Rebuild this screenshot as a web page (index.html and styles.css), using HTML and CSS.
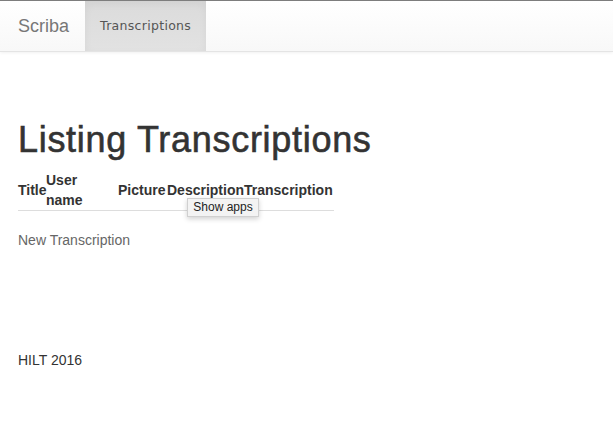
FILE: index.html
```html
<!DOCTYPE html>
<html>
<head>
<meta charset="utf-8">
<title>Scriba</title>
<link rel="stylesheet" href="styles.css">
</head>
<body>
<nav class="navbar">
  <a class="brand" href="#">Scriba</a>
  <a class="nav-item active" href="#">Transcriptions</a>
</nav>
<main class="container">
  <h1 class="title">Listing Transcriptions</h1>
  <table class="list">
    <colgroup>
      <col class="c-title">
      <col class="c-user">
      <col class="c-picture">
      <col class="c-desc">
      <col class="c-trans">
    </colgroup>
    <thead>
      <tr>
        <th>Title</th>
        <th class="th-user">User name</th>
        <th>Picture</th>
        <th>Description</th>
        <th>Transcription</th>
      </tr>
    </thead>
    <tbody></tbody>
  </table>
  <a class="new-link" href="#">New Transcription</a>
  <footer class="footer">HILT 2016</footer>
</main>
<div class="tooltip">Show apps</div>
</body>
</html>
```
FILE: styles.css
```css
html, body {
  margin: 0;
  padding: 0;
  background: #fff;
}
body {
  font-family: "Liberation Sans", Arial, Helvetica, sans-serif;
  font-size: 14px;
  line-height: 20px;
  color: #333;
}
a {
  text-decoration: none;
}
.navbar {
  display: flex;
  align-items: stretch;
  height: 50px;
  border-top: 1px solid #7d7d7d;
  border-bottom: 1px solid #e4e4e4;
  background: linear-gradient(to bottom, #ffffff 0%, #f8f8f8 100%);
  box-shadow: 0 1px 3px rgba(0, 0, 0, 0.06);
}
.brand {
  display: flex;
  align-items: center;
  padding: 0 16px 0 18px;
  font-size: 18px;
  color: #777;
}
.nav-item {
  display: flex;
  align-items: center;
  padding: 0 15px;
  font-family: "DejaVu Sans", Verdana, sans-serif;
  font-size: 12.5px;
  letter-spacing: 0.3px;
  color: #555;
}
.nav-item.active {
  background: linear-gradient(to bottom, #dbdbdb 0%, #e2e2e2 100%);
  box-shadow: inset 0 3px 9px rgba(0, 0, 0, 0.05);
}
.container {
  padding: 0 18px;
}
.title {
  margin: 68px 0 0;
  font-size: 36px;
  line-height: 40px;
  font-weight: normal;
  letter-spacing: 0.7px;
  -webkit-text-stroke: 0.6px #333;
  color: #333;
}
.list {
  margin-top: 10px;
  border-collapse: collapse;
  table-layout: fixed;
  width: 316px;
}
.c-title { width: 28px; }
.c-user { width: 72px; }
.c-picture { width: 49px; }
.c-desc { width: 77px; }
.c-trans { width: 90px; }
.list th {
  padding: 0;
  text-align: left;
  vertical-align: middle;
  font-weight: bold;
  border-bottom: 1px solid #ddd;
  white-space: nowrap;
}
.list th.th-user {
  white-space: normal;
  padding-right: 6px;
}
.new-link {
  display: block;
  margin-top: 19px;
  color: #666;
}
.footer {
  margin-top: 100px;
  color: #333;
}
.tooltip {
  position: absolute;
  left: 187px;
  top: 198px;
  width: 70px;
  height: 17px;
  border: 1px solid #d0d0d0;
  background: #f3f3f3;
  box-shadow: 0 2px 5px rgba(0, 0, 0, 0.18);
  font-family: "Liberation Sans", Arial, sans-serif;
  font-size: 12px;
  line-height: 17px;
  text-align: center;
  color: #222;
}
```
